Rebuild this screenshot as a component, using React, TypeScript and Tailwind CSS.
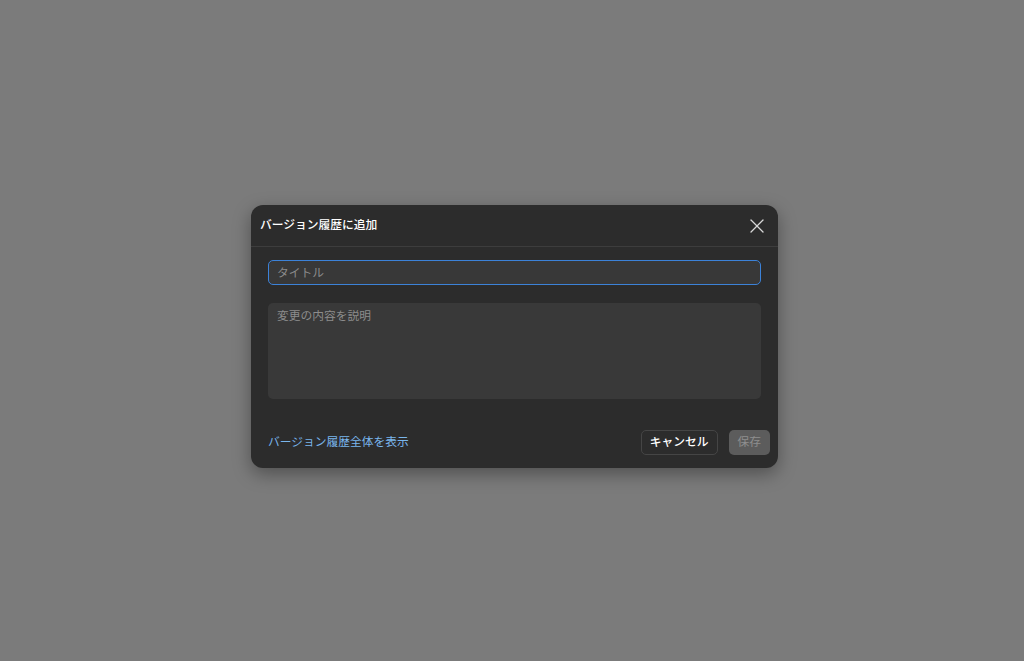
import { X } from "lucide-react";

export default function App() {
  const font = { fontFamily: '"Inter", "Noto Sans CJK JP", sans-serif' };

  return (
    <div className="min-h-screen w-full bg-[#7b7b7b] flex items-start justify-start" style={font}>
      <div className="mt-[205px] ml-[251px] w-[527px] rounded-[12px] bg-[#2c2c2c] shadow-[0_6px_18px_rgba(0,0,0,0.35)] overflow-hidden">
        {/* Header */}
        <div className="h-[42px] flex items-center justify-between pl-[9px] pr-[9px] border-b border-[#3d3d3d]">
          <h2 className="text-[11.75px] font-medium text-white">バージョン履歴に追加</h2>
          <button className="text-[#d8d8d8]">
            <X className="w-[24px] h-[24px]" strokeWidth={1.3} />
          </button>
        </div>

        {/* Body */}
        <div className="pt-[13px] pl-[17px] pr-[17px] flex flex-col gap-[18px]">
          <input
            placeholder="タイトル"
            className="h-[25px] w-full rounded-[5px] border border-[#3c82d8] bg-[#383838] px-[8px] text-[11.75px] text-white placeholder:text-[#8c8c8c] outline-none"
          />
          <textarea
            placeholder="変更の内容を説明"
            className="h-[96px] w-full resize-none rounded-[5px] bg-[#393939] px-[9px] py-[5px] text-[11.75px] text-white placeholder:text-[#8c8c8c] outline-none"
          />
        </div>

        {/* Footer */}
        <div className="mt-[31px] mb-[13px] pl-[17px] pr-[8px] flex items-center justify-between">
          <a className="text-[11.75px] text-[#7ab6ec] cursor-pointer">バージョン履歴全体を表示</a>
          <div className="flex items-center gap-[11px]">
            <button className="h-[25px] px-[8px] rounded-[5px] border border-[#454545] text-[11.75px] font-medium text-white">
              キャンセル
            </button>
            <button className="h-[25px] px-[9px] rounded-[5px] bg-[#5c5c5c] text-[11.75px] text-[#8e8e8e]">
              保存
            </button>
          </div>
        </div>
      </div>
    </div>
  );
}
